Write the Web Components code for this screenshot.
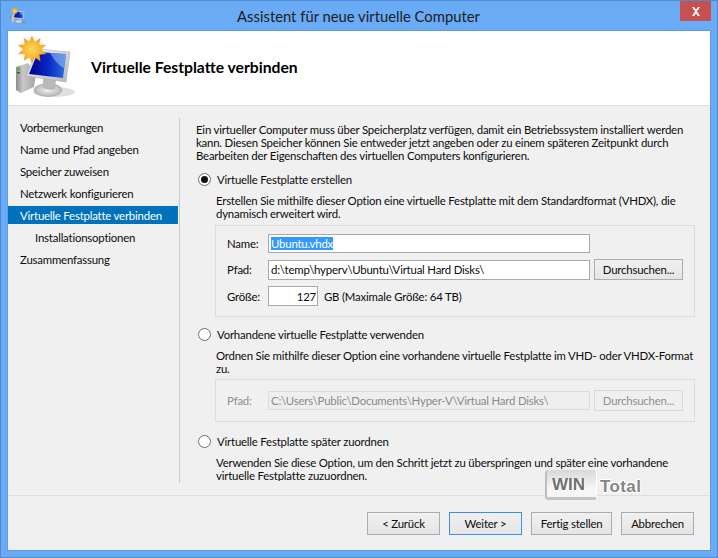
<!DOCTYPE html>
<html lang="de">
<head>
<meta charset="utf-8">
<title>Assistent für neue virtuelle Computer</title>
<style>
  html, body { margin: 0; padding: 0; background: #6aabf5; }
  body { font: 11.4px/13px Lato, "Open Sans", sans-serif; letter-spacing: -0.2px; color: #0c0c0c; overflow: hidden; }
</style>
</head>
<body>
<template id="mon-tpl">
  <style>:host { display: block; } svg { display: block; width: 100%; height: 100%; }</style>
  <svg viewBox="0 0 70 70">
    <defs>
      <linearGradient id="tw" x1="0" y1="0" x2="1" y2="0"><stop offset="0" stop-color="#8b8b8b"/><stop offset=".35" stop-color="#c9c9c9"/><stop offset="1" stop-color="#a4a4a4"/></linearGradient>
      <linearGradient id="bz" x1="0" y1="0" x2="1" y2="1"><stop offset="0" stop-color="#f4f4f4"/><stop offset="1" stop-color="#b4b8bc"/></linearGradient>
      <linearGradient id="sc" x1="0" y1="0" x2="1" y2="0"><stop offset="0" stop-color="#00008e"/><stop offset=".55" stop-color="#0a2bc4"/><stop offset="1" stop-color="#2f6fe6"/></linearGradient>
      <radialGradient id="st"><stop offset="0" stop-color="#ffd75a"/><stop offset="1" stop-color="#f2a21c"/></radialGradient>
      <radialGradient id="ft"><stop offset="0" stop-color="#f2f2f2"/><stop offset="1" stop-color="#b5b5b5"/></radialGradient>
    </defs>
    <ellipse cx="44" cy="62" rx="21" ry="5" fill="#000" opacity=".12"/>
    <path d="M6 37 18 33 26 44 24 57 11 63 6 60Z" fill="url(#tw)"/>
    <rect x="7" y="37.5" width="3" height="3" fill="#5ab52e"/>
    <rect x="7" y="42" width="3" height="1.5" fill="#555"/>
    <ellipse cx="38" cy="60" rx="14" ry="6.5" fill="url(#ft)" stroke="#999" stroke-width=".5"/>
    <path d="M33 48 46 50 45 59Q39 61 33 58Z" fill="#b9b9b9"/>
    <path d="M27 19 60 22 56 52 16 46Z" fill="url(#bz)" stroke="#a0a4a8" stroke-width=".5"/>
    <path d="M28 22 56 24 53 48 19 44Z" fill="url(#sc)"/>
    <path d="M40 23 56 24 54 38Q46 34 40 23Z" fill="#9fc0f5" opacity=".55"/>
    <path d="M22 6l2.6 6 5.6-3.4-1.2 6.4 6.6 .2-4.8 4.4 5 4.2-6.6 .6 1 6.4-5.4-3.6-2.8 6-2.4-6.2-5.6 3.4 1.2-6.4-6.6-.2 4.8-4.4-5-4.2 6.6-.6-1-6.4 5.4 3.6Z" fill="url(#st)" stroke="#e8a32a" stroke-width=".5"/>
  </svg>
</template>

<wizard-window heading="Assistent für neue virtuelle Computer" page="Virtuelle Festplatte verbinden">
  <wizard-steps slot="steps">
    <wizard-step>Vorbemerkungen</wizard-step>
    <wizard-step>Name und Pfad angeben</wizard-step>
    <wizard-step>Speicher zuweisen</wizard-step>
    <wizard-step>Netzwerk konfigurieren</wizard-step>
    <wizard-step current>Virtuelle Festplatte verbinden</wizard-step>
    <wizard-step sub>Installationsoptionen</wizard-step>
    <wizard-step>Zusammenfassung</wizard-step>
  </wizard-steps>

  <div class="intro" style="margin:0 0 9px 0;white-space:nowrap">Ein virtueller Computer muss über Speicherplatz verfügen, damit ein Betriebssystem installiert werden<br>kann. Diesen Speicher können Sie entweder jetzt angeben oder zu einem späteren Zeitpunkt durch<br>Bearbeiten der Eigenschaften des virtuellen Computers konfigurieren.</div>

  <disk-option label="Virtuelle Festplatte erstellen" checked>
    <span slot="desc">Erstellen Sie mithilfe dieser Option eine virtuelle Festplatte mit dem Standardformat (VHDX), die<br>dynamisch erweitert wird.</span>
    <field-box style="margin-top:5px;padding-top:8px;padding-bottom:10px;row-gap:6px">
      <span>Name:</span>
      <text-box selected>Ubuntu.vhdx</text-box>
      <span></span>
      <span>Pfad:</span>
      <text-box>d:\temp\hyperv\Ubuntu\Virtual Hard Disks\</text-box>
      <win-button wide>Durchsuchen...</win-button>
      <span>Größe:</span>
      <div style="display:flex;align-items:center;gap:6px;white-space:nowrap">
        <text-box number style="width:50px">127</text-box><span>GB (Maximale Größe: 64 TB)</span>
      </div>
      <span></span>
    </field-box>
  </disk-option>

  <disk-option label="Vorhandene virtuelle Festplatte verwenden" style="margin-top:9px">
    <span slot="desc">Ordnen Sie mithilfe dieser Option eine vorhandene virtuelle Festplatte im VHD- oder VHDX-Format<br>zu.</span>
    <field-box disabled style="margin-top:4px;padding-top:10px;padding-bottom:10px">
      <span>Pfad:</span>
      <text-box disabled>C:\Users\Public\Documents\Hyper-V\Virtual Hard Disks\</text-box>
      <win-button wide disabled>Durchsuchen...</win-button>
    </field-box>
  </disk-option>

  <disk-option label="Virtuelle Festplatte später zuordnen" style="margin-top:11px">
    <span slot="desc">Verwenden Sie diese Option, um den Schritt jetzt zu überspringen und später eine vorhandene<br>virtuelle Festplatte zuzuordnen.</span>
  </disk-option>

  <win-button slot="actions">&lt; Zurück</win-button>
  <win-button slot="actions" primary>Weiter &gt;</win-button>
  <win-button slot="actions" style="width:81px">Fertig stellen</win-button>
  <win-button slot="actions">Abbrechen</win-button>

  <win-total slot="overlay"></win-total>
</wizard-window>

<script>
class MonitorIcon extends HTMLElement {
  constructor() {
    super();
    this.attachShadow({ mode: "open" });
    this.shadowRoot.appendChild(document.getElementById("mon-tpl").content.cloneNode(true));
  }
}
customElements.define("monitor-icon", MonitorIcon);

class WizardWindow extends HTMLElement {
  constructor() {
    super();
    this.attachShadow({ mode: "open" });
    const heading = this.getAttribute("heading");
    const page = this.getAttribute("page");
    this.shadowRoot.innerHTML = `
      <style>
        :host {
          display: flex;
          flex-direction: column;
          position: relative;
          box-sizing: border-box;
          width: 718px;
          height: 558px;
          background: #6aabf5;
          border: 1px solid #5288d2;
          overflow: hidden;
        }
        .bar {
          display: flex;
          align-items: flex-start;
          height: 29px;
          flex: none;
        }
        .bar monitor-icon { width: 18px; height: 18px; margin: 5px 0 0 8px; flex: none; }
        .bar h1 {
          flex: 1;
          margin: 6px 0 0;
          font: 400 14.8px/18px Lato, "Open Sans", sans-serif;
          letter-spacing: 0;
          color: #1c1c1c;
          text-align: center;
          padding-left: 10px;
        }
        .close {
          display: flex;
          align-items: center;
          justify-content: center;
          width: 31px;
          height: 20px;
          margin-right: 6px;
          background: #c75050;
          flex: none;
        }
        .client {
          flex: 1;
          display: flex;
          flex-direction: column;
          min-height: 0;
          margin: 0 6px 6px;
          border: 1px solid #5f9ae2;
          background: #f0f0f0;
        }
        header {
          display: flex;
          align-items: center;
          height: 74px;
          flex: none;
          background: #fff;
          border-bottom: 1px solid #dfdfdf;
        }
        header monitor-icon { width: 70px; height: 70px; margin: 0 11px 6px 2px; flex: none; }
        header h2 { margin: 0 0 2px; font: 700 15.7px/18px Lato, "Open Sans", sans-serif; letter-spacing: 0; color: #000; }
        .body { flex: 1; display: flex; min-height: 0; }
        .steps { width: 170px; flex: none; padding-top: 12px; }
        .rule { width: 1px; margin: 12px 0 12px 1px; background: #c9c9c9; flex: none; }
        .main {
          flex: 1;
          height: 363px;
          margin-top: 12px;
          padding: 5px 0 0 16px;
          box-sizing: border-box;
          overflow: hidden;
        }
        footer {
          display: flex;
          justify-content: flex-end;
          align-items: flex-start;
          gap: 9px;
          height: 55px;
          flex: none;
          box-sizing: border-box;
          border-top: 1px solid #dfdfdf;
          padding: 16px 16px 0 0;
        }
      </style>
      <div class="bar">
        <monitor-icon></monitor-icon>
        <h1>${heading}</h1>
        <div class="close">
          <svg width="10" height="9" viewBox="0 0 10 9"><path d="M1 0h2l2 2.5L7 0h2L6 4.5 9 9H7L5 6.5 3 9H1l3-4.5Z" fill="#fff"/></svg>
        </div>
      </div>
      <div class="client">
        <header>
          <monitor-icon></monitor-icon>
          <h2>${page}</h2>
        </header>
        <div class="body">
          <div class="steps"><slot name="steps"></slot></div>
          <div class="rule"></div>
          <div class="main"><slot></slot></div>
        </div>
        <footer><slot name="actions"></slot></footer>
      </div>
      <slot name="overlay"></slot>
    `;
  }
}
customElements.define("wizard-window", WizardWindow);

class WizardSteps extends HTMLElement {
  constructor() {
    super();
    this.attachShadow({ mode: "open" });
    this.shadowRoot.innerHTML = `
      <style>:host { display: flex; flex-direction: column; gap: 4px; }</style>
      <slot></slot>
    `;
  }
}
customElements.define("wizard-steps", WizardSteps);

class WizardStep extends HTMLElement {
  constructor() {
    super();
    this.attachShadow({ mode: "open" });
    this.shadowRoot.innerHTML = `
      <style>
        :host { display: block; height: 18px; line-height: 20px; padding-left: 12px; white-space: nowrap; }
        :host([current]) { background: #0072bc; color: #fff; }
        :host([sub]) { padding-left: 27px; }
      </style>
      <slot></slot>
    `;
  }
}
customElements.define("wizard-step", WizardStep);

class DiskOption extends HTMLElement {
  constructor() {
    super();
    this.attachShadow({ mode: "open" });
    this.shadowRoot.innerHTML = `
      <style>
        :host { display: block; }
        .head { display: flex; align-items: center; gap: 6px; height: 16px; margin-left: 2px; }
        .radio {
          width: 11px;
          height: 11px;
          border: 1px solid #6f6f6f;
          border-radius: 50%;
          background: #fff;
          display: flex;
          align-items: center;
          justify-content: center;
          flex: none;
        }
        .dot { width: 7px; height: 7px; border-radius: 50%; background: #111; display: none; }
        :host([checked]) .dot { display: block; }
        .desc { margin: 7px 0 0 20px; white-space: nowrap; }
        .extra { margin-left: 19px; }
      </style>
      <div class="head"><span class="radio"><span class="dot"></span></span><span>${this.getAttribute("label")}</span></div>
      <div class="desc"><slot name="desc"></slot></div>
      <div class="extra"><slot></slot></div>
    `;
  }
}
customElements.define("disk-option", DiskOption);

class FieldBox extends HTMLElement {
  constructor() {
    super();
    this.attachShadow({ mode: "open" });
    this.shadowRoot.innerHTML = `
      <style>
        :host {
          display: grid;
          grid-template-columns: 41px 322px 89px;
          align-items: center;
          box-sizing: border-box;
          width: 480px;
          padding-left: 11px;
          border: 1px solid #dcdcdc;
        }
        :host([disabled]) { color: #8f8f8f; }
      </style>
      <slot></slot>
    `;
  }
}
customElements.define("field-box", FieldBox);

class TextBox extends HTMLElement {
  constructor() {
    super();
    this.attachShadow({ mode: "open" });
    const selected = this.hasAttribute("selected");
    this.shadowRoot.innerHTML = `
      <style>
        :host {
          display: flex;
          align-items: center;
          box-sizing: border-box;
          height: 20px;
          padding: 0 2px;
          border: 1px solid #a9a9a9;
          background: #fff;
          white-space: nowrap;
          overflow: hidden;
        }
        :host([selected]) { height: 19px; }
        :host([number]) { justify-content: flex-end; padding-right: 1px; }
        :host([disabled]) { height: 19px; background: #eeeeee; border-color: #dcdcdc; color: #8a8a8a; }
        .sel { background: #3399ff; color: #fff; line-height: 13px; }
      </style>
      <span class="${selected ? "sel" : ""}"><slot></slot></span>
    `;
  }
}
customElements.define("text-box", TextBox);

class WinButton extends HTMLElement {
  constructor() {
    super();
    this.attachShadow({ mode: "open" });
    this.shadowRoot.innerHTML = `
      <style>
        :host {
          display: flex;
          align-items: center;
          justify-content: center;
          box-sizing: border-box;
          width: 73px;
          height: 23px;
          border: 1px solid #acacac;
          background: linear-gradient(#f0f0f0, #e5e5e5);
          white-space: nowrap;
        }
        :host([primary]) { border-color: #3d8fe6; }
        :host([wide]) { width: 89px; height: 21px; margin-left: 4px; }
        :host([disabled]) { background: #efefef; border-color: #d9d9d9; color: #8f8f8f; }
      </style>
      <slot></slot>
    `;
  }
}
customElements.define("win-button", WinButton);

// Wasserzeichen liegt frei ueber dem Dialog
class WinTotal extends HTMLElement {
  constructor() {
    super();
    this.attachShadow({ mode: "open" });
    this.shadowRoot.innerHTML = `
      <style>
        :host {
          position: absolute;
          left: 544px;
          top: 469px;
          display: flex;
          align-items: center;
          font: 700 17px/20px "Liberation Sans", sans-serif;
          letter-spacing: 0;
        }
        .box {
          box-sizing: border-box;
          width: 52px;
          height: 30px;
          padding: 5px 0 0 5px;
          border-radius: 3px;
          background: linear-gradient(#d8d8d8, #f6f6f6 70%);
          border-left: 2px solid #bdbdbd;
          border-bottom: 3px solid #c4c4c4;
          border-right: 1px solid #fff;
          color: #6f6f6f;
          text-shadow: 1px 1px 0 #fff, -1px 0 0 #fff;
        }
        .rest {
          margin: 4px 0 0 3px;
          color: #858585;
          letter-spacing: .4px;
          text-shadow: 1px 1px 0 #fff, -1px -1px 0 #fff, 1px -1px 0 #fff, -1px 1px 0 #fff;
        }
      </style>
      <div class="box">WIN</div><div class="rest">Total</div>
    `;
  }
}
customElements.define("win-total", WinTotal);
</script>
</body>
</html>
